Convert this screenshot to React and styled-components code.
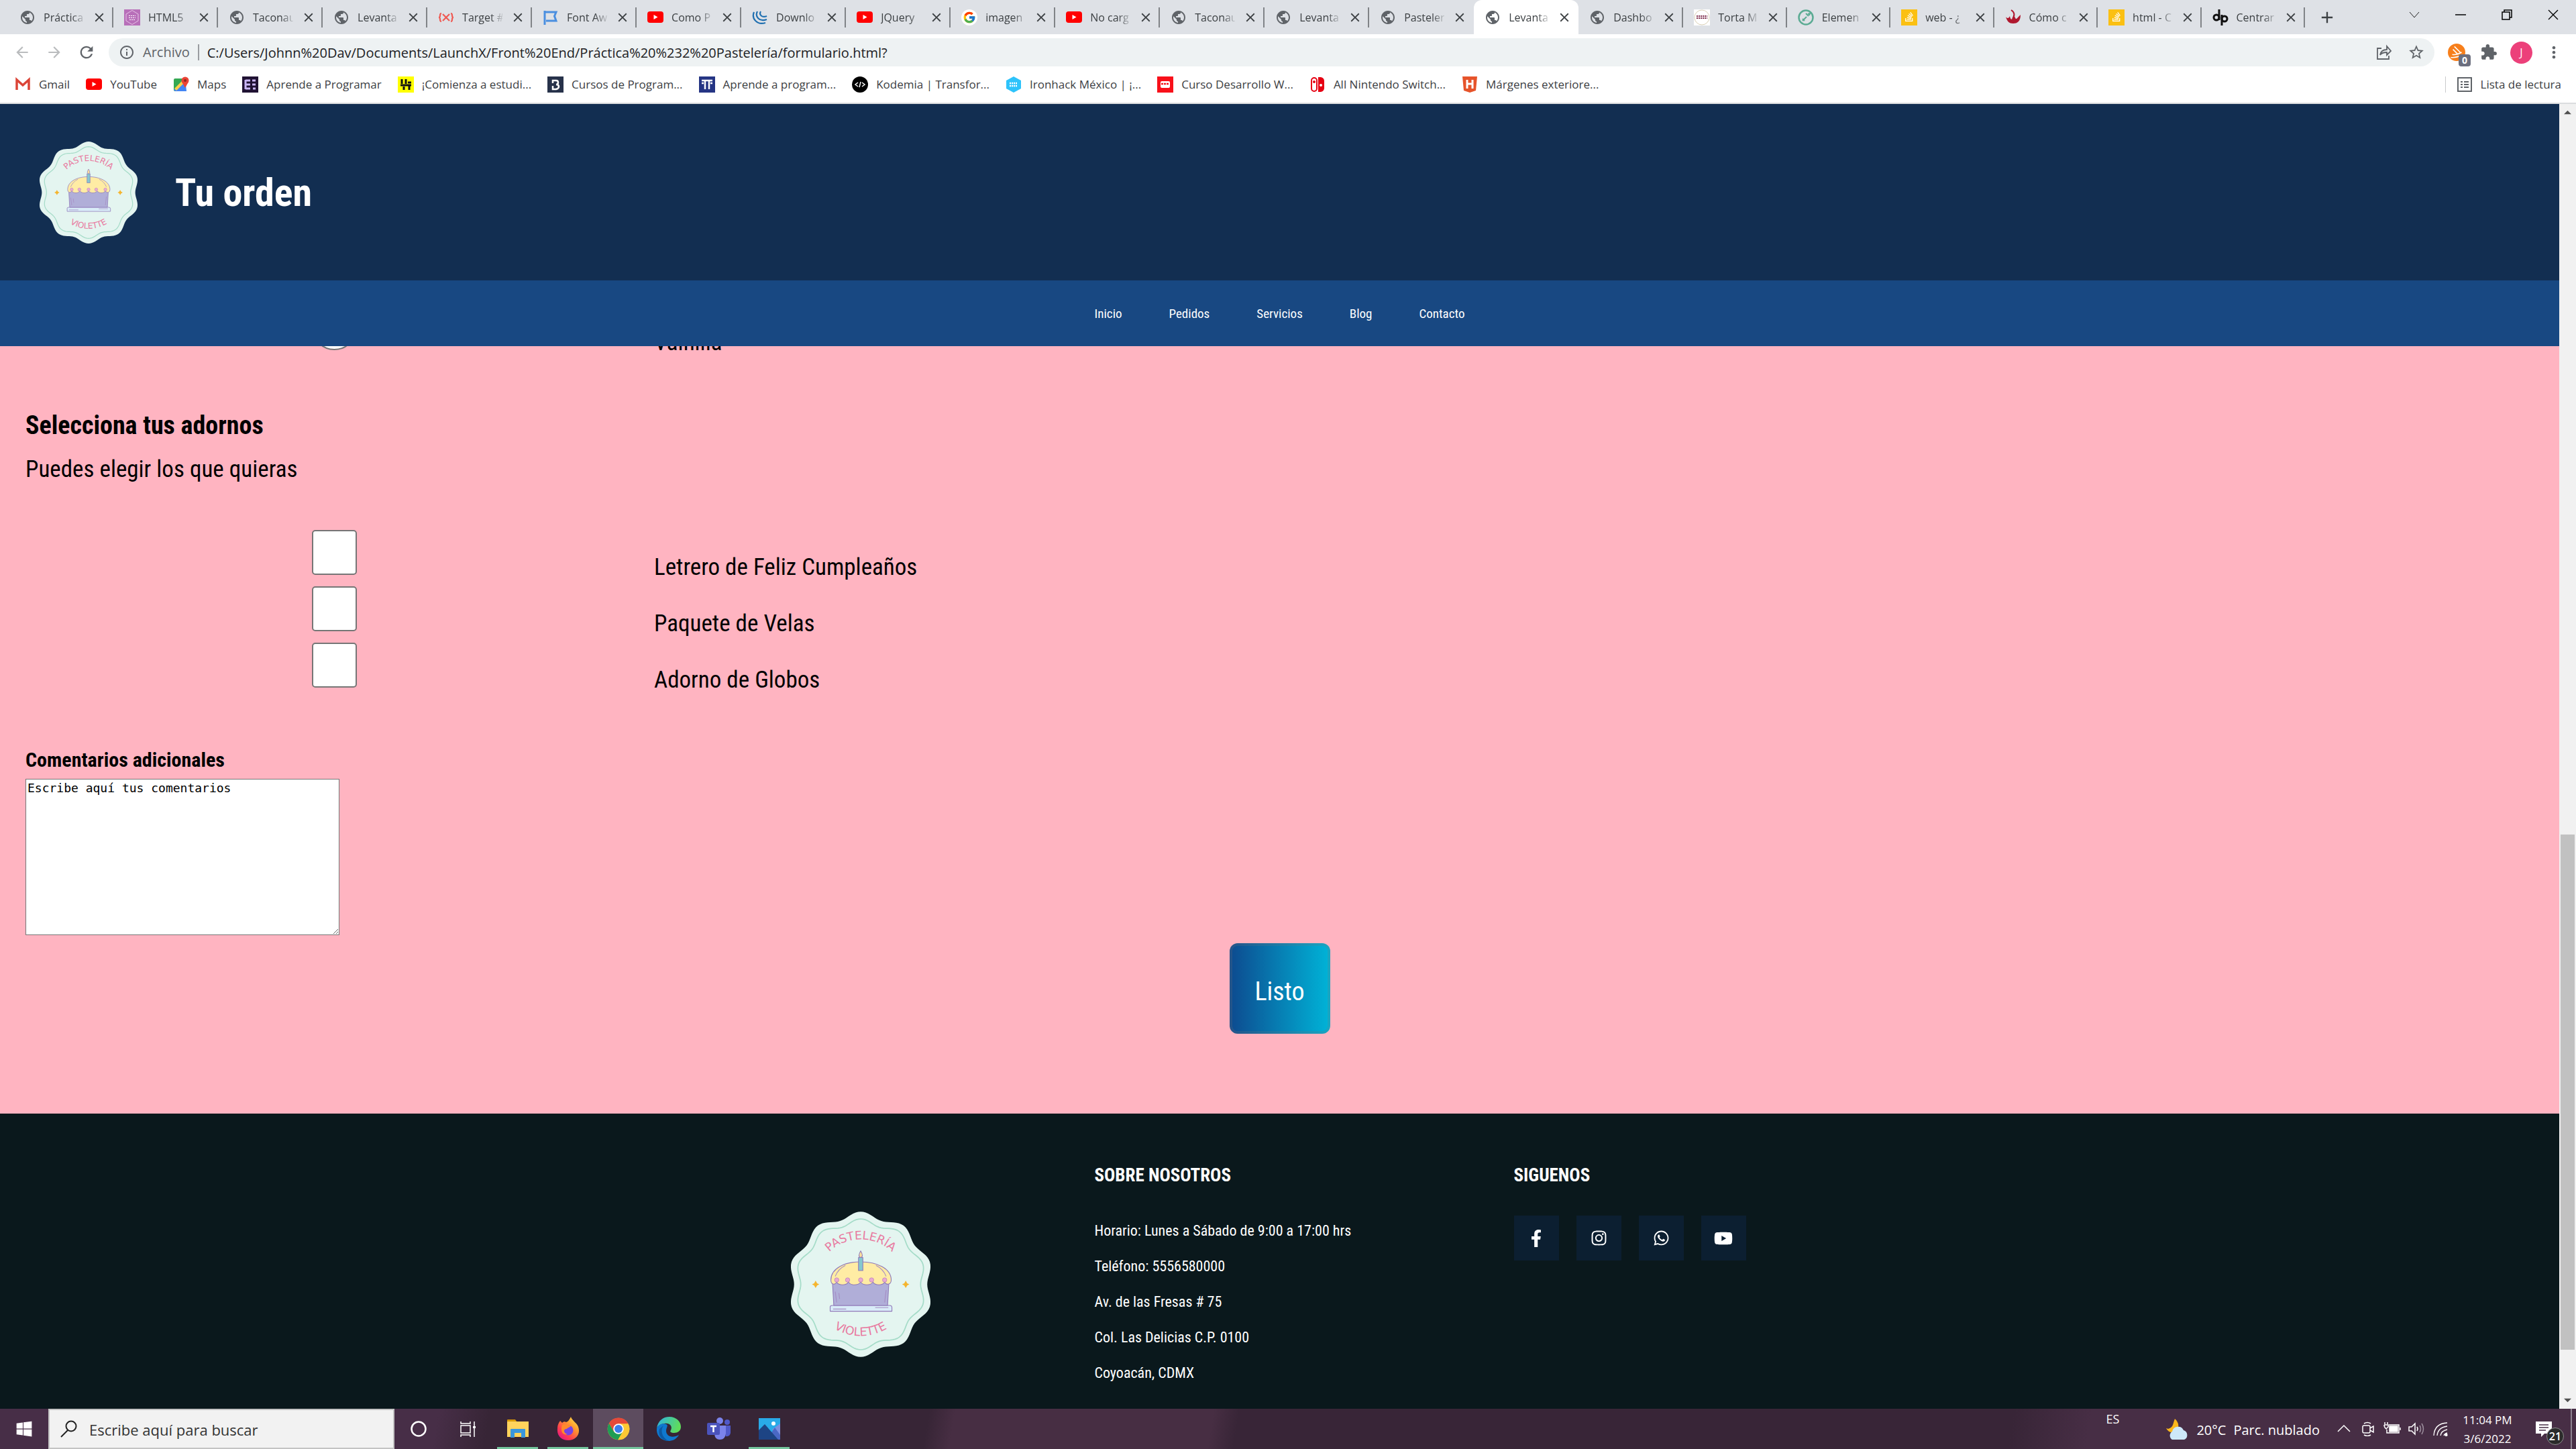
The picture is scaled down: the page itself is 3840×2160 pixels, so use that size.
import React from 'react';
import styled, { createGlobalStyle, css } from 'styled-components';
import { MdPublic, MdArrowBack, MdArrowForward, MdRefresh, MdInfoOutline, MdStarBorder, MdExtension, MdMoreVert, MdClose, MdAdd } from 'react-icons/md';
import { FcGoogle } from 'react-icons/fc';
import { FaFacebookF, FaInstagram, FaWhatsapp, FaYoutube, FaStackOverflow, FaWindows } from 'react-icons/fa';

const hand = '"Roboto Condensed", Roboto, sans-serif';
const ui = '"Open Sans", "Noto Sans", sans-serif';

const Global = createGlobalStyle`
  * { box-sizing: border-box; }
  html, body, #root { margin: 0; height: 100%; }
  body { font-family: ${ui}; overflow: hidden; }
  button { font: inherit; color: inherit; border: 0; padding: 0; background: none; }
  a { color: inherit; text-decoration: none; }
  svg { display: block; flex: none; }
`;

const Desktop = styled.div`
  display: flex;
  flex-direction: column;
  height: 100vh;
`;

/* ---------- browser chrome ---------- */

const TabStrip = styled.div`
  display: flex;
  height: 51px;
  padding-left: 13px;
  background: #dee1e6;
`;
const Tabs = styled.div`
  display: flex;
  flex: 1;
  min-width: 0;
`;
const Tab = styled.div`
  flex: ${(p) => p.$grow} 1 0;
  min-width: 0;
  display: flex;
  align-items: center;
  gap: 12px;
  padding: 0 18px 0 16px;
  color: #3c4043;
  background: linear-gradient(#808387, #808387) right center / 2px 30px no-repeat;
  ${(p) => p.$beforeActive && css`background: none;`}
  ${(p) => p.$active && css`
    background: #fff;
    border-radius: 12px 12px 0 0;
  `}
`;
const TabTitle = styled.button`
  flex: 1;
  min-width: 0;
  font-size: 16px;
  line-height: 28px;
  text-align: left;
  white-space: nowrap;
  overflow: hidden;
  mask-image: linear-gradient(90deg, #000 70%, transparent 105%);
`;
const IconButton = styled.button`
  display: grid;
  place-items: center;
  flex: none;
  width: ${(p) => p.$w || 48}px;
  color: ${(p) => p.$color || '#5f6368'};
`;
const StripEnd = styled.div`
  display: flex;
  width: 404px;
  padding-left: 9px;
`;
const WindowButtons = styled.div`
  display: flex;
  height: 44px;
  margin-left: auto;
`;

const Toolbar = styled.div`
  display: flex;
  align-items: center;
  height: 54px;
  padding: 0 9px;
  background: #fff;
`;
const Omnibox = styled.div`
  flex: 1;
  display: flex;
  align-items: center;
  height: 42px;
  padding: 0 3px 0 15px;
  margin: 0 9px;
  border-radius: 21px;
  background: #eef2f3;
`;
const Scheme = styled.span`
  padding: 0 12px 0 12px;
  margin-right: 12px;
  border-right: 2px solid #9a9da1;
  font-size: 20px;
  line-height: 24px;
  color: #5f6368;
`;
const Address = styled.input`
  flex: 1;
  min-width: 0;
  border: 0;
  padding: 0;
  background: none;
  font-family: ${ui};
  font-size: 20px;
  color: #202124;
`;
const ExtensionBox = styled.button`
  position: relative;
  display: grid;
  place-items: center;
  width: 48px;
  height: 42px;
`;
const CountBadge = styled.span`
  position: absolute;
  right: 3px;
  bottom: 0;
  width: 18px;
  height: 18px;
  border-radius: 4px;
  background: #6c6f7f;
  color: #fff;
  font-size: 14px;
  font-weight: 700;
  line-height: 18px;
`;
const Avatar = styled.button`
  width: 33px;
  height: 33px;
  margin: 0 8px;
  border-radius: 50%;
  background: #ec407a;
  color: #fff;
  font-size: 16px;
`;
const BookmarkBar = styled.nav`
  display: flex;
  align-items: center;
  gap: 24px;
  height: 50px;
  padding: 0 22px 6px;
  background: #fff;
  border-bottom: 2px solid #dadcde;
`;
const Bookmark = styled.a`
  display: flex;
  align-items: center;
  gap: 12px;
  font-size: 17px;
  line-height: 24px;
  color: #3c4043;
  white-space: nowrap;
`;
const ReadingList = styled(Bookmark)`
  margin-left: auto;
  padding-left: 16px;
  border-left: 1px solid #c8cacc;
`;

/* ---------- bakery page ---------- */

const Viewport = styled.div`
  display: flex;
  flex: 1;
  min-height: 0;
  overflow: hidden;
`;
const Page = styled.div`
  display: flex;
  flex-direction: column;
  flex: 1;
  min-width: 0;
  overflow: hidden;
  background: #ffb4c1;
  font-family: ${hand};
`;
const Top = styled.header`
  position: relative;
  z-index: 1;
`;
const Banner = styled.div`
  display: flex;
  align-items: center;
  gap: 56px;
  height: 263px;
  padding-left: 59px;
  background: #122e51;
`;
const Title = styled.h1`
  margin: 0;
  font-size: 58px;
  line-height: 72px;
  color: #fff;
`;
const Menu = styled.nav`
  display: flex;
  align-items: center;
  justify-content: center;
  gap: 70px;
  height: 98px;
  background: #184882;
  color: #fff;
  font-size: 19px;
`;
const Form = styled.form`
  display: flex;
  flex-direction: column;
  padding: 0 38px 119px;
  margin-top: -61px;
`;
const Choices = styled.div`
  display: grid;
  row-gap: 17px;
  margin-bottom: ${(p) => p.$after}px;
`;
const Choice = styled.label`
  display: grid;
  grid-template-columns: minmax(0, 920px) 1fr;
  column-gap: 17px;
  height: 67px;
  font-size: 35px;
  line-height: 44px;
`;
const Mark = styled.input`
  appearance: none;
  justify-self: center;
  width: 67px;
  height: 67px;
  margin: 0;
  border: 2px solid #767676;
  border-radius: ${(p) => (p.type === 'radio' ? '50%' : '5px')};
  background: #fff;
`;
const ChoiceText = styled.span`
  padding-top: 34px;
`;
const heading = css`
  margin: 0;
  font-weight: 700;
  line-height: 48px;
`;
const SectionTitle = styled.h2`
  ${heading}
  font-size: 38px;
`;
const CommentsLabel = styled.label`
  ${heading}
  margin-bottom: 4px;
  font-size: 30px;
`;
const Hint = styled.p`
  margin: 18px 0 66px;
  font-size: 35px;
  line-height: 48px;
`;
const Comments = styled.textarea`
  width: 468px;
  height: 233px;
  margin-bottom: 12px;
  padding: 2px;
  border: 1px solid #767676;
  font-family: "DejaVu Sans Mono", monospace;
  font-size: 18px;
  line-height: 21px;
  color: #000;
`;
const Submit = styled.button`
  align-self: center;
  width: 150px;
  height: 135px;
  padding-top: 8px;
  border: 4px solid rgba(118, 118, 118, 0.22);
  border-radius: 12px;
  background: linear-gradient(90deg, #0d4a8f, #00b4d8) border-box;
  color: #fff;
  font-size: 38px;
`;

const Footer = styled.footer`
  flex: 1;
  background: #0a181c;
  color: #fff;
`;
const FooterColumns = styled.div`
  display: grid;
  grid-template-columns: repeat(3, 1fr);
  column-gap: 73px;
  max-width: 1802px;
  margin: 0 auto;
  padding-top: 68px;
`;
const FooterLogo = styled.div`
  display: grid;
  justify-content: center;
  padding-top: 78px;
`;
const FooterHeading = styled.h3`
  margin: 0 0 36px;
  font-size: 27px;
  line-height: 48px;
`;
const InfoList = styled.ul`
  list-style: none;
  margin: -4px 0 0;
  padding: 0;
  font-size: 22px;
  line-height: 53px;
`;
const Social = styled.div`
  display: flex;
  gap: 26px;
`;
const SocialLink = styled.a`
  display: grid;
  place-items: center;
  width: 67px;
  height: 67px;
  background: #0c1f31;
`;

const ScrollBar = styled.div`
  display: flex;
  flex-direction: column;
  width: 25px;
  background: #f1f1f1;
`;
const ScrollArrow = styled.button`
  display: grid;
  place-items: center;
  height: 25px;
`;
const ScrollPart = styled.div`
  flex: ${(p) => p.$grow} 0 0;
  margin: 0 2px;
  background: ${(p) => (p.$thumb ? '#c1c1c1' : 'transparent')};
`;

/* ---------- taskbar ---------- */

const TaskBar = styled.div`
  display: flex;
  height: 60px;
  color: #fff;
  background: linear-gradient(100deg, #472e47 0 17%, #372536 19% 36%, #472e43 37% 47%, #382537 48% 78%, #472e45 81%);
`;
const TaskButton = styled.button`
  display: grid;
  place-items: center;
  flex: none;
  width: ${(p) => p.$w || 75}px;
  background: ${(p) => (p.$active ? '#5d4c5f' : 'none')};
  ${(p) => p.$open && css`
    background-image: linear-gradient(#74c69d, #74c69d);
    background-position: center bottom;
    background-size: ${p.$active ? '100%' : '61px'} 3px;
    background-repeat: no-repeat;
  `}
`;
const Search = styled.label`
  display: flex;
  align-items: center;
  gap: 17px;
  width: 516px;
  padding-left: 16px;
  border: 2px solid #c3c3c3;
  background: #f2f2f2;
`;
const SearchInput = styled.input`
  flex: 1;
  min-width: 0;
  border: 0;
  padding: 2px 0 0;
  background: none;
  font-family: ${ui};
  font-size: 22px;
  &::placeholder { color: #333; opacity: 1; }
`;
const Tray = styled.div`
  display: flex;
  margin-left: auto;
  font-size: 20px;
`;
const Language = styled.span`
  width: 90px;
  line-height: 30px;
  font-size: 18px;
`;
const Weather = styled.button`
  display: flex;
  align-items: center;
  gap: 11px;
  padding-top: 3px;
  margin-right: 18px;
`;
const TrayIcon = styled.button`
  display: grid;
  place-items: center;
  width: 36px;
`;
const Clock = styled.div`
  width: 104px;
  padding-top: 3px;
  text-align: center;
  font-size: 17px;
  line-height: 28px;
`;
const Notice = styled.button`
  position: relative;
  display: grid;
  place-items: center;
  width: 72px;
  padding-right: 8px;
`;
const NoticeCount = styled.span`
  position: absolute;
  right: 10px;
  bottom: 6px;
  width: 26px;
  height: 26px;
  border: 1px solid #8d8d8d;
  border-radius: 50%;
  background: #2b2b2b;
  font-size: 16px;
  font-weight: 600;
  line-height: 24px;
`;
const ShowDesktop = styled.button`
  width: 8px;
  border-left: 2px solid #8f8391;
`;

/* ---------- drawings ---------- */

const scallop = (radius) => {
  const pts = [];
  for (let i = 0; i < 180; i++) {
    const t = (i * Math.PI) / 90;
    const r = radius * (0.958 + 0.042 * Math.cos(10 * t));
    pts.push(`${(r * Math.sin(t)).toFixed(2)} ${(-r * Math.cos(t)).toFixed(2)}`);
  }
  return `M${pts.join('L')}Z`;
};

function CakeLogo({ width, height, id }) {
  return (
    <svg width={width} height={height} viewBox="-96 -100 192 200" role="img" aria-label="Pastelería Violette">
      <path d={scallop(100)} fill="#e4f5f0" />
      <path d={scallop(90)} fill="none" stroke="#a5dcc8" strokeWidth="1.6" />
      <path id={`${id}-a`} d="M-62 0A62 62 0 0 1 62 0" fill="none" />
      <path id={`${id}-b`} d="M-71 0A71 71 0 0 0 71 0" fill="none" />
      <g fill="#e87aa0" fontFamily="DejaVu Sans, sans-serif" fontSize="16" textAnchor="middle">
        <text><textPath href={`#${id}-a`} startOffset="50%">PASTELERÍA</textPath></text>
        <text><textPath href={`#${id}-b`} startOffset="50%">VIOLETTE</textPath></text>
      </g>
      <g stroke="#8f78b8" strokeWidth="1" strokeLinejoin="round">
        <path d="M-42 37V31Q-42 29-39 29H40Q43 29 43 32V37Z" fill="#d9ecf8" />
        <path d="M-39-6L-37 29H37L39-6Z" fill="#b0aed8" />
        <path d="M-41-6C-41-22-22-31 0-31S42-22 42-6C42 0 36 2 33-3C30 2 20 2 17-3C13 2 4 2 0-3C-4 2-13 2-17-3C-20 2-30 2-33-3C-36 2-41 0-41-6Z" fill="#ffeca4" />
        <path d="M-3-37H3V-19H-3Z" fill="#85c8cf" />
        <path d="M0-46C3-41 3-37 0-37S-3-41 0-46Z" fill="#ffe19a" />
      </g>
      <g fill="#e9a9d2" stroke="#b37bb5" strokeWidth=".6">
        {[-33, -18, 0, 15, 33].map((x) => <circle key={x} cx={x} cy="-6" r="3" />)}
      </g>
      <path d="M-35-11Q-31-21-21-26M35-11Q31-21 21-26M-35 10L-33 25M35 8L33 25M-30 12L-29 20M-38 34H-20M20 32H38" fill="none" stroke="#a58cc4" strokeWidth="1" />
      <path d="M-62-5L-60-1.500L-57 0L-60 1.500L-62 5L-64 1.500L-67 0L-64-1.500ZM62-5L64-1.500L67 0L64 1.500L62 5L60 1.500L57 0L60-1.500Z" fill="#f5b52e" />
    </svg>
  );
}

const Svg = ({ s = 24, box = 24, children, ...rest }) => (
  <svg width={s} height={s} viewBox={`0 0 ${box} ${box}`} fill="none" aria-hidden="true" {...rest}>{children}</svg>
);

const icons = {
  globe: <MdPublic size={24} color="#5f6368" />,
  yt: <Svg><rect y="3" width="24" height="17" rx="4" fill="#f00" /><path d="M9.500 8L15.500 11.500L9.500 15Z" fill="#fff" /></Svg>,
  hex: <Svg><path fill="#b86fb9" d="M0 0H24V24H0Z" /><path d="M12 1.500L21 7V17L12 22.500L3 17V7Z" stroke="#e6c4e6" /><path d="M7 9.500H17M7 12.500H17M8 15.500H16" stroke="#fff" strokeDasharray="2 1" /></Svg>,
  braces: <Svg stroke="#ef5b54" strokeWidth="2.200"><path d="M5 6Q3 6 3 9T1 12Q3 12 3 15T5 18M19 6Q21 6 21 9T23 12Q21 12 21 15T19 18M7 7L17 17M17 7L7 17" /></Svg>,
  flag: <Svg><path d="M3 2V23M4 4H20L17.500 10L20 17H5" stroke="#4a8fe0" strokeWidth="3" /></Svg>,
  jquery: <Svg stroke="#1f6fb0" strokeWidth="2.200"><path d="M3 4C-1 13 7 24 20 20M8 3C4 11 11 19 22 15M13 3C10 8 15 13 22 10" /></Svg>,
  google: <Svg><circle cx="12" cy="12" r="12" fill="#fff" /><FcGoogle x="2" y="2" size={20} /></Svg>,
  torta: <Svg><path fill="#fff" d="M0 0H24V24H0Z" /><circle cx="12" cy="12" r="11" stroke="#d9cfb4" /><path d="M4 10H20M4 13H20" stroke="#7b2747" strokeWidth="2.200" strokeDasharray="2 1" /></Svg>,
  element: <Svg><circle cx="12" cy="12" r="10.500" stroke="#5bab93" strokeWidth="2.500" /><path d="M7 17L13 11M12 6L16 10M15 7L18 6L17 9M7 14L10 17" stroke="#5bab93" strokeWidth="2" /></Svg>,
  so: <Svg><path fill="#fbc012" d="M0 0H24V24H0Z" /><FaStackOverflow x="4" y="3" size={16} color="#fff" /></Svg>,
  fire: <Svg><path d="M1 11C4 15 6 12 7 10C8 17 12 16 12 8C16 12 15 17 19 12L23 8C23 18 18 21 12 21C6 21 3 18 1 11Z" fill="#b0182f" /><path d="M9 1C14 4 15 9 11 14" stroke="#b0182f" strokeWidth="2" /></Svg>,
  dp: <Svg stroke="#111" strokeWidth="3"><circle cx="6" cy="12" r="4" /><path d="M10 0V16M14 8V24" /><circle cx="18" cy="14" r="4" /></Svg>,
  gmail: <Svg stroke="#db4437" strokeWidth="3.500"><path d="M3 20V5L12 13L21 5V20" /></Svg>,
  maps: <Svg><rect x="1" y="3" width="18" height="19" rx="2" fill="#34a853" /><path d="M1 20L18 3L20 22H3Z" fill="#4285f4" /><path d="M2 18L16 4L19 7L5 21Z" fill="#ffd04b" /><circle cx="18" cy="6" r="5.500" fill="#ea4335" /><path d="M13 8L18 17L23 8Z" fill="#ea4335" /><circle cx="18" cy="6" r="2" fill="#8e2a22" /></Svg>,
  purple: <Svg><path fill="#201233" d="M0 0H24V24H0Z" /><path d="M5 5V19M5 6H12M5 12H12M5 18H12M15 6H20M15 12H20M16 18H20" stroke="#c9b5f5" strokeWidth="3" /></Svg>,
  yellow: <Svg><path fill="#ff0" d="M0 0H24V24H0Z" /><path d="M6 4V11M12 4V11M17 13V20M9 15V20M4 13H20M15 9H20" stroke="#111" strokeWidth="3" /></Svg>,
  navyB: <Svg><path fill="#27324a" d="M0 0H24V24H0Z" /><path d="M8 10V6H13Q16 6 16 9T13 12Q17 12 17 15T13 19H8V14" stroke="#fff" strokeWidth="2.500" /></Svg>,
  blueT: <Svg><path fill="#253584" d="M0 0H24V24H0Z" /><path d="M4 6H20M9 6V19M15 6V19M4 10H7M17 10H20" stroke="#fff" strokeWidth="2.500" /></Svg>,
  kodemia: <Svg><circle cx="12" cy="12" r="12" fill="#000" /><path d="M9 9L5 12L9 15M15 9L19 12L15 15M13 8L11 16" stroke="#fff" strokeWidth="1.500" /></Svg>,
  iron: <Svg><path d="M12 0L23 6V18L12 24L1 18V6Z" fill="#2dc3fb" /><path d="M6 10H18M6 14H18" stroke="#fff" strokeWidth="2.500" strokeDasharray="2 1" /></Svg>,
  bus: <Svg><path fill="#f8101a" d="M0 0H24V24H0Z" /><rect x="5" y="7" width="14" height="10" rx="2" fill="#fff" /><path d="M6 11H18" stroke="#f8101a" strokeWidth="2.500" strokeDasharray="3 1" /></Svg>,
  nsw: <Svg><rect x="3" y="2" width="8" height="20" rx="4" stroke="#e60012" strokeWidth="2" /><circle cx="7" cy="8" r="2" fill="#e60012" /><path d="M13 1H17Q22 2 22 7V17Q22 22 17 23H13Z" fill="#e60012" /><circle cx="17" cy="13" r="2" fill="#fff" /></Svg>,
  htmlH: <Svg><path d="M1 0H23L21 21L12 24L3 21Z" fill="#e6532a" /><path d="M8 5V18M16 5V18M8 11H16" stroke="#fff" strokeWidth="3" /></Svg>,
};

const tabs = [
  ['globe', 'Práctica'], ['hex', 'HTML5'], ['globe', 'Taconau'], ['globe', 'Levanta'], ['braces', 'Target #'],
  ['flag', 'Font Aw'], ['yt', 'Como P'], ['jquery', 'Downlo'], ['yt', 'JQuery'], ['google', 'imagen'],
  ['yt', 'No carg'], ['globe', 'Taconau'], ['globe', 'Levanta'], ['globe', 'Pasteler'], ['globe', 'Levanta'],
  ['globe', 'Dashbo'], ['torta', 'Torta M'], ['element', 'Elemen'], ['so', 'web - ¿'], ['fire', 'Cómo c'],
  ['so', 'html - C'], ['dp', 'Centrar'],
];
const activeTab = 14;

const bookmarks = [
  ['gmail', 'Gmail'], ['yt', 'YouTube'], ['maps', 'Maps'], ['purple', 'Aprende a Programar'],
  ['yellow', '¡Comienza a estudi...'], ['navyB', 'Cursos de Program...'], ['blueT', 'Aprende a program...'],
  ['kodemia', 'Kodemia | Transfor...'], ['iron', 'Ironhack México | ¡...'], ['bus', 'Curso Desarrollo W...'],
  ['nsw', 'All Nintendo Switch...'], ['htmlH', 'Márgenes exteriore...'],
];

function Browser() {
  return (
    <>
      <TabStrip>
        <Tabs>
          {tabs.map(([icon, title], i) => (
            <Tab key={i} $grow={i > activeTab + 1 ? 154 : 156} $active={i === activeTab} $beforeActive={i === activeTab - 1}>
              {icons[icon]}
              <TabTitle>{title}</TabTitle>
              <IconButton $w={14} $color="#3c4043" aria-label="Cerrar pestaña"><MdClose size={22} /></IconButton>
            </Tab>
          ))}
        </Tabs>
        <StripEnd>
          <IconButton aria-label="Nueva pestaña" $color="#3c4043"><MdAdd size={28} /></IconButton>
          <WindowButtons>
            <IconButton $w={69} aria-label="Buscar pestañas"><Svg s={16} box={16} stroke="#222"><path d="M1 4L8 12L15 4" /></Svg></IconButton>
            <IconButton $w={69} aria-label="Minimizar"><Svg s={16} box={16} stroke="#000" strokeWidth="1.500"><path d="M0 8H16" /></Svg></IconButton>
            <IconButton $w={69} aria-label="Restaurar"><Svg s={16} box={16} stroke="#000" strokeWidth="1.500"><path d="M1 4H12V15H1ZM4 4V1H15V12H12" /></Svg></IconButton>
            <IconButton $w={69} aria-label="Cerrar"><Svg s={16} box={16} stroke="#000" strokeWidth="1.300"><path d="M1 1L15 15M15 1L1 15" /></Svg></IconButton>
          </WindowButtons>
        </StripEnd>
      </TabStrip>
      <Toolbar>
        <IconButton aria-label="Atrás" $color="#babcbe"><MdArrowBack size={26} /></IconButton>
        <IconButton aria-label="Adelante" $color="#babcbe"><MdArrowForward size={26} /></IconButton>
        <IconButton aria-label="Recargar"><MdRefresh size={28} /></IconButton>
        <Omnibox>
          <MdInfoOutline size={24} color="#5f6368" />
          <Scheme>Archivo</Scheme>
          <Address aria-label="Dirección" readOnly value="C:/Users/Johnn%20Dav/Documents/LaunchX/Front%20End/Práctica%20%232%20Pastelería/formulario.html?" />
          <IconButton aria-label="Compartir"><Svg stroke="#5f6368" strokeWidth="1.800"><path d="M8 6H2V22H19V17M6 16C7 10 11 8 16 8V3L22 10L16 16V12C11 12 8 13 6 16Z" /></Svg></IconButton>
          <IconButton aria-label="Favorito"><MdStarBorder size={26} /></IconButton>
        </Omnibox>
        <ExtensionBox aria-label="Extensión">
          <Svg s={26}><circle cx="12" cy="12" r="12" fill="#f77f1b" /><path d="M4 19Q12 20 20 15M6 15Q12 16 19 12M9 4L17 12M7 8L13 14" stroke="#fff" strokeWidth="1.500" /></Svg>
          <CountBadge>0</CountBadge>
        </ExtensionBox>
        <IconButton aria-label="Extensiones"><MdExtension size={26} /></IconButton>
        <Avatar>J</Avatar>
        <IconButton aria-label="Más"><MdMoreVert size={28} /></IconButton>
      </Toolbar>
      <BookmarkBar>
        {bookmarks.map(([icon, label]) => (
          <Bookmark key={label} href="#">{icons[icon]}<span>{label}</span></Bookmark>
        ))}
        <ReadingList href="#">
          <Svg stroke="#5f6368" strokeWidth="2"><path d="M2 2H22V22H2ZM6 8H9M11 8H18M6 12H9M11 12H18M6 16H9M11 16H18" /></Svg>
          <span>Lista de lectura</span>
        </ReadingList>
      </BookmarkBar>
    </>
  );
}

function Option({ type = 'checkbox', name, children }) {
  return (
    <Choice>
      <Mark type={type} name={name} />
      <ChoiceText>{children}</ChoiceText>
    </Choice>
  );
}

function Bakery() {
  return (
    <Page>
      <Top>
        <Banner>
          <CakeLogo width={146} height={152} id="top" />
          <Title>Tu orden</Title>
        </Banner>
        <Menu>
          {['Inicio', 'Pedidos', 'Servicios', 'Blog', 'Contacto'].map((m) => <a key={m} href="#">{m}</a>)}
        </Menu>
      </Top>
      <Form onSubmit={(e) => e.preventDefault()}>
        <Choices $after={88}>
          <Option type="radio" name="sabor">Vainilla</Option>
        </Choices>
        <SectionTitle>Selecciona tus adornos</SectionTitle>
        <Hint>Puedes elegir los que quieras</Hint>
        <Choices $after={84}>
          <Option>Letrero de Feliz Cumpleaños</Option>
          <Option>Paquete de Velas</Option>
          <Option>Adorno de Globos</Option>
        </Choices>
        <CommentsLabel htmlFor="comentarios">Comentarios adicionales</CommentsLabel>
        <Comments id="comentarios" defaultValue="Escribe aquí tus comentarios" spellCheck={false} />
        <Submit type="submit">Listo</Submit>
      </Form>
      <Footer>
        <FooterColumns>
          <FooterLogo><CakeLogo width={208} height={217} id="foot" /></FooterLogo>
          <div>
            <FooterHeading>SOBRE NOSOTROS</FooterHeading>
            <InfoList>
              <li>Horario: Lunes a Sábado de 9:00 a 17:00 hrs</li>
              <li>Teléfono: 5556580000</li>
              <li>Av. de las Fresas # 75</li>
              <li>Col. Las Delicias C.P. 0100</li>
              <li>Coyoacán, CDMX</li>
            </InfoList>
          </div>
          <div>
            <FooterHeading>SIGUENOS</FooterHeading>
            <Social>
              <SocialLink href="#" aria-label="Facebook"><FaFacebookF size={26} /></SocialLink>
              <SocialLink href="#" aria-label="Instagram"><FaInstagram size={25} /></SocialLink>
              <SocialLink href="#" aria-label="WhatsApp"><FaWhatsapp size={25} /></SocialLink>
              <SocialLink href="#" aria-label="YouTube"><FaYoutube size={28} /></SocialLink>
            </Social>
          </div>
        </FooterColumns>
      </Footer>
    </Page>
  );
}

const taskApps = [
  { name: 'Explorador', open: true, art: <Svg s={32} box={32}><path d="M0 3Q0 2 1 2H12L15 6H0Z" fill="#d99a06" /><path d="M0 5H32V28H0Z" fill="#ffd35c" /><path d="M5 29V17Q5 16 6 16H26Q27 16 27 17V29H21V22H11V29Z" fill="#3a96dd" /></Svg> },
  { name: 'Firefox', open: true, art: <Svg s={36} box={36}><defs><linearGradient id="ff" x1="1" y1="0" x2="0.200" y2="1"><stop offset="0" stopColor="#fff44f" /><stop offset=".4" stopColor="#ff9a2e" /><stop offset=".75" stopColor="#ff3d50" /><stop offset="1" stopColor="#e31587" /></linearGradient></defs><path d="M22 0C23 5 31 9 33 15C37 26 29 35 18 35C8 35 1 28 2 18C2 12 4 9 6 6L9 9C11 7 13 7 15 8C18 7 20 4 22 0Z" fill="url(#ff)" /><circle cx="18" cy="20" r="7.500" fill="#7543e5" /><path d="M9 12C14 10 18 13 22 13C21 16 17 16 16 18C10 18 11 25 17 26C10 28 6 22 9 12Z" fill="#ff8a2b" /></Svg> },
  { name: 'Chrome', open: true, active: true, art: <Svg s={34} box={48}><circle cx="24" cy="24" r="23" fill="#fcc934" /><path d="M4 12.500A23 23 0 0 1 44 12.500L34 19H24L14 30Z" fill="#e5493a" /><path d="M4 12.500A23 23 0 0 0 23 47L33 30L24 34L14 29.500Z" fill="#1f9d55" /><path d="M24 13H44.200A23 23 0 0 1 23 47L33.500 29Z" fill="#fcc934" /><circle cx="24" cy="24" r="11" fill="#fff" /><circle cx="24" cy="24" r="8.500" fill="#3b7ded" /></Svg> },
  { name: 'Edge', art: <Svg s={36} box={36}><defs><linearGradient id="eg" x1="0" y1="0" x2="1" y2=".3"><stop offset="0" stopColor="#2bb1e8" /><stop offset="1" stopColor="#5fdc5c" /></linearGradient></defs><path d="M0 17C2 6 9 0 19 0C29 0 36 7 36 15C36 21 31 24 26 24C21 24 19 22 21 20C24 14 19 9 12 10C7 10 2 13 0 17Z" fill="url(#eg)" /><path d="M0 17C3 11 9 9 14 11C18 13 14 16 14 21C14 28 22 33 33 27C29 34 23 36 17 36C6 35-1 28 0 17Z" fill="#0f78cf" /><path d="M10 13C4 22 10 34 19 36C9 36 1 29 4 18Z" fill="#0c59a4" /></Svg> },
  { name: 'Teams', art: <Svg s={36} box={36}><circle cx="19" cy="6" r="5" fill="#7b83eb" /><circle cx="30" cy="8" r="4" fill="#5059c9" /><path d="M24 13H35V24Q34 30 28 29Z" fill="#5059c9" /><path d="M11 13H28V25Q27 34 19 34Q12 34 11 26Z" fill="#7b83eb" /><rect y="9" width="19" height="18" rx="2" fill="#4b53bc" /><path d="M5 14H14M9.500 14V23" stroke="#fff" strokeWidth="2.500" /></Svg> },
  { name: 'Fotos', open: true, art: <Svg s={32} box={32}><path d="M0 0H32V32H0Z" fill="#29aae8" /><path d="M20 17L32 30V8Z" fill="#7d8fe0" /><path d="M12 32L24 14L32 25V32Z" fill="#4a68c5" /><path d="M0 18L9 9L29 32H0Z" fill="#1d4484" /><circle cx="22" cy="8" r="3" fill="#fff" /></Svg> },
];

function WindowsBar() {
  return (
    <TaskBar>
      <TaskButton $w={72} aria-label="Inicio"><FaWindows size={26} /></TaskButton>
      <Search>
        <Svg s={26} box={26} stroke="#222" strokeWidth="2"><circle cx="16" cy="9" r="7.500" /><path d="M11 15L1 25" /></Svg>
        <SearchInput aria-label="Buscar" placeholder="Escribe aquí para buscar" />
      </Search>
      <TaskButton $w={72} aria-label="Cortana"><Svg stroke="#fff" strokeWidth="2.500"><circle cx="12" cy="12" r="10.500" /></Svg></TaskButton>
      <TaskButton $w={74} aria-label="Vista de tareas"><Svg stroke="#fff" strokeWidth="1.500"><path d="M2 7H16V18H2ZM2 1V4H16V1M2 24V21H16V24M22 1V24" /><path d="M20 8H24V11H20Z" fill="#fff" stroke="none" /></Svg></TaskButton>
      {taskApps.map((a) => (
        <TaskButton key={a.name} aria-label={a.name} $open={a.open} $active={a.active}>{a.art}</TaskButton>
      ))}
      <Tray>
        <Language>ES</Language>
        <Weather>
          <Svg s={34} box={34}><path d="M13 0C10 7 11 13 3 15L0 14C3 20 9 22 14 18C20 15 20 6 13 0Z" fill="#fbb71c" /><path d="M9 31A7 7 0 0 1 9 19A9 9 0 0 1 26 17A7.500 7.500 0 0 1 27 31Z" fill="#cde8f9" /></Svg>
          <span>20°C</span>
          <span>Parc. nublado</span>
        </Weather>
        <TrayIcon aria-label="Iconos ocultos"><Svg s={20} box={20} stroke="#fff" strokeWidth="1.500"><path d="M1 14L10 5L19 14" /></Svg></TrayIcon>
        <TrayIcon aria-label="Cámara"><Svg s={22} box={22} stroke="#fff" strokeWidth="1.500"><rect x="3" y="6" width="11" height="11" rx="2" /><path d="M14 10L19 7V16L14 13M5 3Q10 0 15 3M5 20Q10 23 15 20" /></Svg></TrayIcon>
        <TrayIcon aria-label="Batería"><Svg s={26} box={26} stroke="#fff" strokeWidth="1.500"><path d="M8 7H23V19H5V14M25 11V15M2 3V6M6 3V6M1 7H7V10Q4 13 4 13Q1 11 1 7" /><path d="M9 9H21V17H9Z" fill="#fff" /></Svg></TrayIcon>
        <TrayIcon aria-label="Volumen"><Svg stroke="#fff" strokeWidth="1.500"><path d="M1 9H5L10 4V20L5 15H1ZM13 9Q15 12 13 15" /><path d="M17 7Q20 12 17 17M20 4Q25 12 20 20" stroke="#9c8f9d" /></Svg></TrayIcon>
        <TrayIcon aria-label="Red"><Svg s={22} box={22} stroke="#fff" strokeWidth="1.300"><path d="M1 21Q2 3 21 2M6 21Q7 9 21 7M11 21Q12 14 21 12M16 21Q17 18 21 17" /><circle cx="19.500" cy="20" r="1.500" fill="#fff" /></Svg></TrayIcon>
        <Clock>11:04 PM<br />3/6/2022</Clock>
        <Notice aria-label="Notificaciones">
          <Svg><path d="M0 1H24V19H13L8 24V19H0Z" fill="#fff" /><path d="M5 6H19M5 10H19M5 14H15" stroke="#472e45" strokeWidth="1.500" /></Svg>
          <NoticeCount>21</NoticeCount>
        </Notice>
        <ShowDesktop aria-label="Mostrar escritorio" />
      </Tray>
    </TaskBar>
  );
}

export default function App() {
  return (
    <Desktop>
      <Global />
      <Browser />
      <Viewport>
        <Bakery />
        <ScrollBar>
          <ScrollArrow aria-label="Subir"><Svg s={11} box={12}><path d="M0 9L6 3L12 9Z" fill="#505050" /></Svg></ScrollArrow>
          <ScrollPart $grow={1064} />
          <ScrollPart $grow={768} $thumb />
          <ScrollPart $grow={63} />
          <ScrollArrow aria-label="Bajar"><Svg s={11} box={12}><path d="M0 3L6 9L12 3Z" fill="#505050" /></Svg></ScrollArrow>
        </ScrollBar>
      </Viewport>
      <WindowsBar />
    </Desktop>
  );
}
